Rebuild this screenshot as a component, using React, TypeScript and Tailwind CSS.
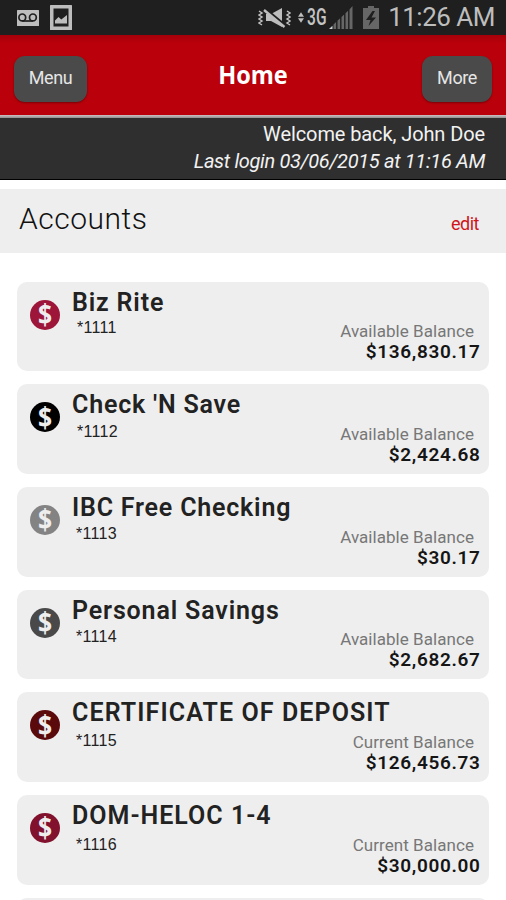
import React from 'react';

interface Account {
  name: string;
  number: string;
  label: string;
  balance: string;
  iconClass: string;
  nameClass: string;
  numberClass: string;
}

const accounts: Account[] = [
  {
    name: 'Biz Rite',
    number: '*1111',
    label: 'Available Balance',
    balance: '$136,830.17',
    iconClass: 'bg-[#9d1539]',
    nameClass: 'tracking-[0.85px]',
    numberClass: 'ml-[5px] mt-[0.5px]',
  },
  {
    name: "Check 'N Save",
    number: '*1112',
    label: 'Available Balance',
    balance: '$2,424.68',
    iconClass: 'bg-black',
    nameClass: 'tracking-[0.8px]',
    numberClass: 'ml-[5px] mt-[2px]',
  },
  {
    name: 'IBC Free Checking',
    number: '*1113',
    label: 'Available Balance',
    balance: '$30.17',
    iconClass: 'bg-[#838383]',
    nameClass: 'tracking-[0.8px]',
    numberClass: 'ml-[4px] mt-[1px]',
  },
  {
    name: 'Personal Savings',
    number: '*1114',
    label: 'Available Balance',
    balance: '$2,682.67',
    iconClass: 'bg-[#494949]',
    nameClass: 'tracking-[0.85px]',
    numberClass: 'ml-[4px] mt-[1.5px]',
  },
  {
    name: 'CERTIFICATE OF DEPOSIT',
    number: '*1115',
    label: 'Current Balance',
    balance: '$126,456.73',
    iconClass: 'bg-[#5b0a0c]',
    nameClass: 'tracking-[1.1px]',
    numberClass: 'ml-[4px] mt-[3px]',
  },
  {
    name: 'DOM-HELOC 1-4',
    number: '*1116',
    label: 'Current Balance',
    balance: '$30,000.00',
    iconClass: 'bg-[#81112d]',
    nameClass: 'tracking-[1px]',
    numberClass: 'ml-[4px] mt-[4px]',
  },
];

const StatusBar: React.FC = () => (
  <div className="flex h-[35px] shrink-0 items-center bg-[#1f1f1f] pl-[17px] pr-[11px] text-[#bdbdbd]">
    <svg width="22" height="16" viewBox="0 0 22 16" className="mt-[1px]">
      <rect width="22" height="16" rx="0.5" fill="#bdbdbd" />
      <g fill="none" stroke="#1f1f1f" strokeWidth="1.7">
        <circle cx="5.3" cy="7.4" r="3.4" />
        <circle cx="15.9" cy="7.4" r="3.4" />
        <path d="M5.3 11h10.6" />
      </g>
    </svg>
    <svg width="22" height="25" viewBox="0 0 22 25" className="ml-[11px]">
      <rect width="22" height="25" rx="0.5" fill="#bdbdbd" />
      <rect x="3.5" y="3.5" width="15" height="18" fill="#1f1f1f" />
      <path d="M5 18.500v-3l3.500-3.500 2.800 2.400L17 10v8.500z" fill="#bdbdbd" />
    </svg>
    <div className="ml-auto flex items-center">
      <svg width="33" height="22" viewBox="0 0 33 22" fill="none" stroke="#bdbdbd">
        <path d="M1 4l3 2-3 2 3 2-3 2 3 2-3 2 3 2M29 4l3 2-3 2 3 2-3 2 3 2-3 2 3 2" strokeWidth="1.5" />
        <path d="M8 7h5l11-6v19l-11-6H8z" fill="#bdbdbd" stroke="none" />
        <path d="M7.500 2L28 19" stroke="#1f1f1f" strokeWidth="2.500" />
        <path d="M6 3L26.500 20" strokeWidth="2.400" />
      </svg>
      <svg width="6" height="11" viewBox="0 0 7 12" className="ml-[7px]" fill="#bdbdbd">
        <path d="M0 5l3.500-5L7 5zM0 7h7l-3.500 5z" />
      </svg>
      <span className="ml-[3px] flex w-[18px] items-center">
        <span className="origin-left scale-x-[0.68] text-[23px] font-medium leading-[26px] text-[#c4c4c4]">3G</span>
      </span>
      <svg width="24" height="23" viewBox="0 0 24 23" className="ml-[4px]" fill="#666">
        <path d="M0 23l3.500-3.300V23z" fill="#d0d0d0" />
        <path d="M4.500 18.500l2.600-2.500v7H4.500zM8.500 14.700l2.600-2.500V23H8.500zM12.500 11l2.600-2.500V23h-2.600zM16.500 7.200l2.600-2.500V23h-2.600zM20.500 3.400L23.500 0v23h-3z" />
      </svg>
      <svg width="16" height="23" viewBox="0 0 16 23" className="ml-[10px]">
        <path d="M5 0h6v2h5v21H0V2h5z" fill="#666" />
        <path d="M9.500 5L3 14h4.500l-2 6L13 11.500H8.500L12 5z" fill="#1f1f1f" />
      </svg>
      <span className="ml-[9px] whitespace-nowrap text-[26px] leading-[35px] tracking-[-0.5px]">11:26 AM</span>
    </div>
  </div>
);

const Header: React.FC = () => (
  <header className="flex h-[80px] shrink-0 items-start justify-between bg-[#b9000b] bg-linear-to-b from-[#a4000a] to-[#b9000b] to-[8px] px-[14px] pt-[21px]">
    <button className="h-[46px] w-[73px] rounded-[11px] bg-[#4a4a4a] pb-[3px] text-[18px] tracking-[-0.4px] text-[#e6e6e6] shadow-[0_1px_2px_#7a0008]">
      Menu
    </button>
    <h1 className="mr-[3px] scale-x-[0.94] text-[25px] font-bold leading-[36px] text-white [font-family:'Open_Sans',sans-serif]">
      Home
    </h1>
    <button className="h-[46px] w-[70px] rounded-[11px] bg-[#4a4a4a] pb-[3px] text-[18px] tracking-[-0.4px] text-[#e6e6e6] shadow-[0_1px_2px_#7a0008]">
      More
    </button>
  </header>
);

const AccountCard: React.FC<{ account: Account }> = ({ account }) => (
  <li className="flex h-[89.700px] shrink-0 rounded-[10px] bg-[#eee] pl-[13px] pr-[9px]">
    <span
      className={`mt-[18px] flex h-[30px] w-[30px] shrink-0 items-center justify-center rounded-full text-[#eee] ${account.iconClass}`}
    >
      <span className="-mt-[1px] ml-px scale-x-[0.88] text-[28px] font-bold leading-[30px] [font-family:'Open_Sans',sans-serif]">
        $
      </span>
    </span>
    <div className="ml-[12px] flex-1 pt-[5px]">
      <h3 className={`whitespace-nowrap text-[25px] font-semibold leading-[31px] text-[#222] ${account.nameClass}`}>
        {account.name}
      </h3>
      <p
        className={`text-[16px] leading-[20px] tracking-[0.3px] text-[#222] [font-family:'Liberation_Sans',sans-serif] ${account.numberClass}`}
      >
        {account.number}
      </p>
    </div>
    <div className="-ml-40 shrink-0 pt-[39.800px] text-right">
      <p className="pr-[6px] text-[17px] leading-[21px] tracking-[0.05px] text-[#777]">{account.label}</p>
      <p className="-mr-[0.5px] text-[19px] font-semibold leading-[20px] tracking-[0.65px] text-[#151515]">
        {account.balance}
      </p>
    </div>
  </li>
);

const App: React.FC = () => {
  return (
    <div className="flex h-[900px] w-[506px] flex-col overflow-hidden bg-white [font-family:Roboto,sans-serif]">
      <StatusBar />
      <Header />
      <div className="h-[3px] shrink-0 bg-linear-to-b from-[#cfc3c5] to-[#8e8e8e]" />
      <div className="flex h-[62px] shrink-0 flex-col border-b border-black bg-[#2f2f2f] pr-[21px] pt-[3px] text-right text-[20px] leading-[27px] text-[#f2f2f2]">
        <p className="tracking-[-0.1px]">Welcome back, John Doe</p>
        <p className="italic tracking-[-0.33px]">Last login 03/06/2015 at 11:16 AM</p>
      </div>
      <div className="mt-[9px] flex h-[64px] shrink-0 items-center justify-between bg-[#eee] pl-[19px] pr-[27px]">
        <h2 className="mb-[4px] text-[30px] font-light leading-[36px] tracking-[0.5px] text-[#111]">Accounts</h2>
        <a className="mt-[5px] text-[18px] tracking-[-0.5px] text-[#d0151b]">edit</a>
      </div>
      <ul className="mt-[28.500px] flex flex-col gap-[13px] px-[17px]">
        {accounts.map((account) => (
          <AccountCard key={account.number} account={account} />
        ))}
        <li className="h-[89.700px] shrink-0 rounded-[10px] bg-[#eee]" />
      </ul>
    </div>
  );
};

export default App;
